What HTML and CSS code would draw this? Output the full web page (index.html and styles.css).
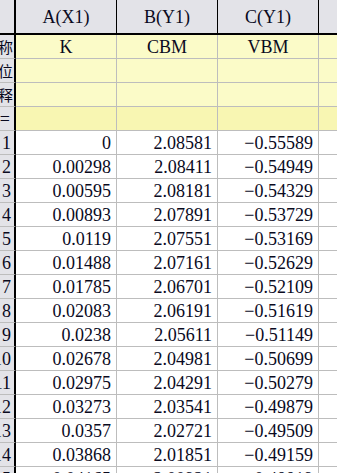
FILE: index.html
```html
<!DOCTYPE html>
<html>
<head>
<meta charset="utf-8">
<link rel="stylesheet" href="styles.css">
</head>
<body>
<div class="sheet">
  <div class="row head">
    <div class="rh"></div>
    <div class="c">A(X1)</div>
    <div class="c">B(Y1)</div>
    <div class="c">C(Y1)</div>
    <div class="c"></div>
  </div>
  <div class="row meta">
    <div class="rh"><span class="cjk">长名称</span></div>
    <div class="c">K</div>
    <div class="c">CBM</div>
    <div class="c">VBM</div>
    <div class="c"></div>
  </div>
  <div class="row meta">
    <div class="rh"><span class="cjk">单位</span></div>
    <div class="c"></div><div class="c"></div><div class="c"></div><div class="c"></div>
  </div>
  <div class="row meta">
    <div class="rh"><span class="cjk">注释</span></div>
    <div class="c"></div><div class="c"></div><div class="c"></div><div class="c"></div>
  </div>
  <div class="row fx">
    <div class="rh"><span>F(x)=</span></div>
    <div class="c"></div><div class="c"></div><div class="c"></div><div class="c"></div>
  </div>
  <div class="row data"><div class="rh"><span>1</span></div><div class="c">0</div><div class="c">2.08581</div><div class="c">−0.55589</div><div class="c"></div></div>
  <div class="row data"><div class="rh"><span>2</span></div><div class="c">0.00298</div><div class="c">2.08411</div><div class="c">−0.54949</div><div class="c"></div></div>
  <div class="row data"><div class="rh"><span>3</span></div><div class="c">0.00595</div><div class="c">2.08181</div><div class="c">−0.54329</div><div class="c"></div></div>
  <div class="row data"><div class="rh"><span>4</span></div><div class="c">0.00893</div><div class="c">2.07891</div><div class="c">−0.53729</div><div class="c"></div></div>
  <div class="row data"><div class="rh"><span>5</span></div><div class="c">0.0119</div><div class="c">2.07551</div><div class="c">−0.53169</div><div class="c"></div></div>
  <div class="row data"><div class="rh"><span>6</span></div><div class="c">0.01488</div><div class="c">2.07161</div><div class="c">−0.52629</div><div class="c"></div></div>
  <div class="row data"><div class="rh"><span>7</span></div><div class="c">0.01785</div><div class="c">2.06701</div><div class="c">−0.52109</div><div class="c"></div></div>
  <div class="row data"><div class="rh"><span>8</span></div><div class="c">0.02083</div><div class="c">2.06191</div><div class="c">−0.51619</div><div class="c"></div></div>
  <div class="row data"><div class="rh"><span>9</span></div><div class="c">0.0238</div><div class="c">2.05611</div><div class="c">−0.51149</div><div class="c"></div></div>
  <div class="row data"><div class="rh"><span>10</span></div><div class="c">0.02678</div><div class="c">2.04981</div><div class="c">−0.50699</div><div class="c"></div></div>
  <div class="row data"><div class="rh"><span>11</span></div><div class="c">0.02975</div><div class="c">2.04291</div><div class="c">−0.50279</div><div class="c"></div></div>
  <div class="row data"><div class="rh"><span>12</span></div><div class="c">0.03273</div><div class="c">2.03541</div><div class="c">−0.49879</div><div class="c"></div></div>
  <div class="row data"><div class="rh"><span>13</span></div><div class="c">0.0357</div><div class="c">2.02721</div><div class="c">−0.49509</div><div class="c"></div></div>
  <div class="row data"><div class="rh"><span>14</span></div><div class="c">0.03868</div><div class="c">2.01851</div><div class="c">−0.49159</div><div class="c"></div></div>
  <div class="row data"><div class="rh"><span>15</span></div><div class="c">0.04165</div><div class="c">2.00921</div><div class="c">−0.48819</div><div class="c"></div></div>
</div>
</body>
</html>
```
FILE: styles.css
```css
html, body {
  margin: 0;
  padding: 0;
  background: #ffffff;
  overflow: hidden;
}
.sheet {
  width: 337px;
  height: 473px;
  overflow: hidden;
  font-family: "Liberation Serif", "Times New Roman", serif;
  font-size: 18px;
  color: #0a0a1e;
}
.row {
  display: grid;
  grid-template-columns: 16px 101px 101px 101px 40px;
  height: 24px;
}
.c, .rh {
  box-sizing: border-box;
  border-bottom: 1px solid #bdbdbd;
  border-right: 1px solid #bdbdbd;
  display: flex;
  align-items: center;
  overflow: hidden;
  white-space: nowrap;
  line-height: 1;
}
.rh {
  background: #e3e3e8;
  border-right: 2px solid #000;
  justify-content: flex-end;
  padding-right: 3px;
}
.rh span { flex: none; }
.cjk {
  font-family: "Noto Sans CJK SC", sans-serif;
  font-size: 15px;
}
.row.meta .rh { padding-right: 1px; }
.row.fx .rh { padding-right: 4px; }
.head { height: 35px; }
.head .c, .head .rh {
  background: #e3e3e8;
  border-right: 1px solid #000;
  border-bottom: 2px solid #000;
  justify-content: center;
}
.head .rh { border-right: 2px solid #000; }
.meta .c {
  background: #fbfbc8;
  justify-content: center;
}
.fx .c {
  background: #f8f6b2;
}
.data .c {
  justify-content: flex-end;
  padding-right: 5px;
  padding-top: 1px;
}
```
